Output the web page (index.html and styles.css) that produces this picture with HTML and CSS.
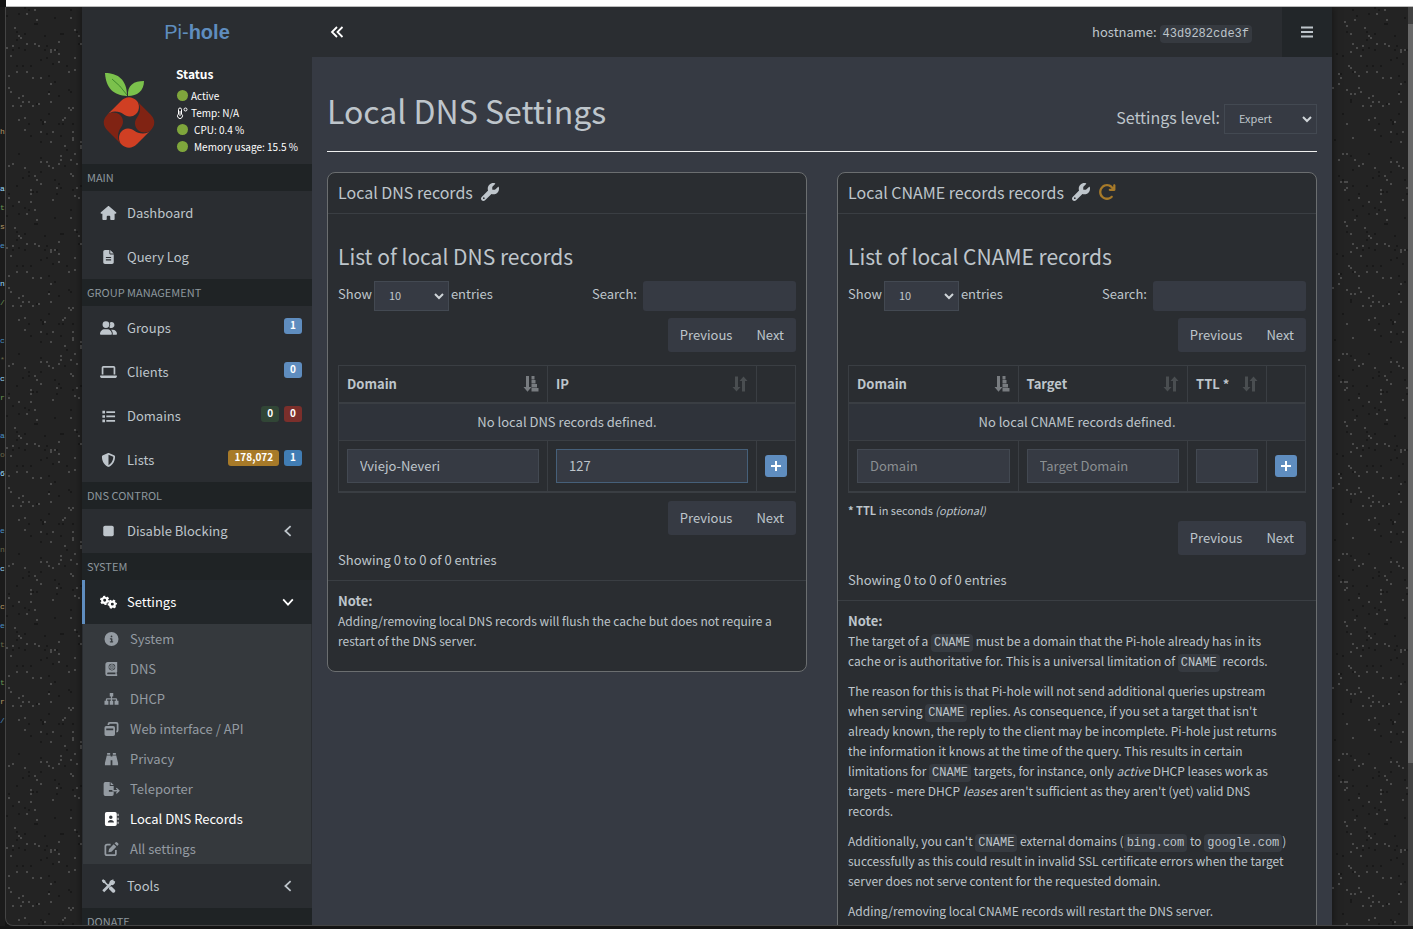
FILE: index.html
```html
<!DOCTYPE html>
<html lang="en">
<head>
  <meta charset="UTF-8">
  <title>Pi-hole - Local DNS Settings</title>
  <link rel="stylesheet" href="styles.css">
</head>
<body>
  <svg class="sprite" aria-hidden="true">
    <symbol id="home" viewBox="0 0 576 512"><path d="M575.8 255.500c0 18-15 32.100-32 32.100h-32l.7 160.200V472c0 22.100-17.900 40-40 40H392c-22.100 0-40-17.900-40-40V384c0-17.700-14.300-32-32-32H256c-17.700 0-32 14.300-32 32v88c0 22.100-17.900 40-40 40H104c-22.100 0-40-17.900-40-40V287.600H32c-18 0-32-14-32-32.100c0-9 3-17 10-24L266.400 8c7-7 15-8 22-8s15 2 21 7L564.800 231.500c8 7 12 15 11 24z"/></symbol>
    <symbol id="file" viewBox="0 0 384 512"><path fill-rule="evenodd" d="M64 0C28.700 0 0 28.700 0 64V448c0 35.300 28.700 64 64 64H320c35.300 0 64-28.700 64-64V160H256c-17.700 0-32-14.300-32-32V0zM256 0V128H384zM96 256H288v40H96zM96 340H288v40H96z"/></symbol>
    <symbol id="users" viewBox="0 0 640 512"><path d="M96 128a128 128 0 1 1 256 0A128 128 0 1 1 96 128zM0 482.300C0 383.800 79.800 304 178.300 304h91.400C368.200 304 448 383.800 448 482.300c0 16.400-13.300 29.700-29.700 29.700H29.700C13.300 512 0 498.700 0 482.300zM609.300 512H471.400c5.400-9.400 8.600-20.300 8.600-32v-8c0-60.700-27.100-115.200-69.800-151.800h68.500C567.800 320 640 392.200 640 481.300c0 17-13.800 30.700-30.700 30.700zM432 256c-31 0-59-12.600-79.300-32.900C372.400 196.500 384 163.600 384 128c0-26.800-6.600-52.100-18.300-74.300C384.300 40.100 407.200 32 432 32c61.900 0 112 50.100 112 112s-50.100 112-112 112z"/></symbol>
    <symbol id="laptop" viewBox="0 0 640 512"><path d="M128 32C92.700 32 64 60.700 64 96V352h64V96H512V352h64V96c0-35.300-28.700-64-64-64H128zM19.200 384C8.600 384 0 392.600 0 403.200C0 445.600 34.400 480 76.800 480H563.200c42.400 0 76.800-34.400 76.800-76.800c0-10.600-8.600-19.200-19.200-19.200z"/></symbol>
    <symbol id="list" viewBox="0 0 16 16"><path d="M1 2h3v3H1zM1 7h3v3H1zM1 12h3v3H1zM5.500 2.500h10v2h-10zM5.500 7.500h10v2h-10zM5.500 12.500h10v2h-10z"/></symbol>
    <symbol id="shield" viewBox="0 0 512 512"><path fill-rule="evenodd" d="M256 0c4.600 0 9.200 1 13.400 2.900L457.700 82.800c22 9.300 38.400 31 38.300 57.200c-.5 99.200-41.300 280.700-213.600 363.200c-16.700 8-36.100 8-52.800 0C57.300 420.700 16.500 239.200 16 140c-.1-26.200 16.300-47.900 38.300-57.200L242.700 2.900C246.800 1 251.400 0 256 0zm0 66.800V444.800C394 378 431.100 230.100 432 141.400z"/></symbol>
    <symbol id="stop" viewBox="0 0 16 16"><rect x="2" y="2" width="12" height="12" rx="2"/></symbol>
    <symbol id="gears" viewBox="0 0 20 16"><g fill="none" stroke="currentColor"><circle cx="5.500" cy="6" r="3" stroke-width="2.500"/><circle cx="5.500" cy="6" r="4.500" stroke-width="2" stroke-dasharray="2.500 2.210"/><circle cx="14.500" cy="10.500" r="3" stroke-width="2.500"/><circle cx="14.500" cy="10.500" r="4.500" stroke-width="2" stroke-dasharray="2.500 2.210" stroke-dashoffset="2"/></g></symbol>
    <symbol id="info" viewBox="0 0 512 512"><path fill-rule="evenodd" d="M256 512A256 256 0 1 0 256 0a256 256 0 1 0 0 512zM216 336h24V272H216c-13.300 0-24-10.700-24-24s10.700-24 24-24h48c13.300 0 24 10.700 24 24v88h8c13.300 0 24 10.700 24 24s-10.700 24-24 24H216c-13.300 0-24-10.700-24-24s10.700-24 24-24zm40-208a32 32 0 1 1 0 64 32 32 0 1 1 0-64z"/></symbol>
    <symbol id="book" viewBox="0 0 16 16"><path fill-rule="evenodd" d="M4 0h10.500v11.500H14v2.500h.5v2H4a3 3 0 0 1-3-3V3a3 3 0 0 1 3-3zM4 12a1 1 0 0 0 0 2h8.500v-2zM8.500 2a3.800 3.800 0 1 0 0 7.600a3.800 3.800 0 1 0 0-7.600z"/><path d="M5.500 5.800h6M8.500 2.800v6" stroke="currentColor"/><circle cx="8.500" cy="5.800" r="2.600" fill="none" stroke="currentColor"/></symbol>
    <symbol id="sitemap" viewBox="0 0 18 16"><path d="M7 1h4v4H9.700v2H14a1.500 1.500 0 0 1 1.500 1.500V10H17v4.500h-4.500V10H14V8.500H9.700V10H11v4.500H7V10h1.300V8.500H4V10h1.500v4.500H1V10h1.500V8.500A1.500 1.500 0 0 1 4 7h4.300V5H7z"/></symbol>
    <symbol id="windows" viewBox="0 0 16 16"><path fill-rule="evenodd" d="M2 4.500h8a2 2 0 0 1 2 2V14a2 2 0 0 1-2 2H2a2 2 0 0 1-2-2V6.500a2 2 0 0 1 2-2zM2 7.500v1.800h8V7.500z"/><path d="M4.500 3.500V2.500Q4.500 1 6 1H13.500Q15 1 15 2.500V9.500Q15 11 13.500 11" fill="none" stroke="currentColor" stroke-width="2"/></symbol>
    <symbol id="binoculars" viewBox="0 0 16 16"><path d="M3 1h3.500v2H3zM9.500 1H13v2H9.500zM2.600 4H7v11H.5v-2.500zM13.400 4H9v11h6.500v-2.500zM7 5h2v4.500H7z"/></symbol>
    <symbol id="export" viewBox="0 0 18 16"><path d="M2 0h5v4.500h4.500V9H6v2h5.500v3a2 2 0 0 1-2 2H2a2 2 0 0 1-2-2V2a2 2 0 0 1 2-2zM8 0l3.500 3.500H8z"/><path d="M10 10h7M14.500 7l3 3l-3 3" fill="none" stroke="currentColor" stroke-width="1.500"/></symbol>
    <symbol id="address" viewBox="0 0 16 16"><path fill-rule="evenodd" d="M2.500 0H12a2 2 0 0 1 2 2v12a2 2 0 0 1-2 2H2.500a2 2 0 0 1-2-2V2a2 2 0 0 1 2-2zM7.200 4a2 2 0 1 0 0 4a2 2 0 1 0 0-4zM3.800 12h7c0-2-1.500-3-3.500-3s-3.500 1-3.500 3zM15 2h1v2.500h-1zM15 6.500h1V9h-1zM15 11h1v2.500h-1z"/></symbol>
    <symbol id="edit" viewBox="0 0 16 16"><path d="M11.500 1.500l1-1q1-1 2 0l1 1q1 1 0 2l-1 1zM10.500 2.500l3 3L8 11l-3.500.7L5.200 8z"/><path d="M7 3H3Q1 3 1 5v8q0 2 2 2h8q2 0 2-2V9" fill="none" stroke="currentColor" stroke-width="2"/></symbol>
    <symbol id="tools" viewBox="0 0 16 16"><path d="M2 14L14 2" stroke="currentColor" stroke-width="3"/><path d="M9 3.500Q10.500 0 14 .5L11.500 3v1.500H13L15.500 2Q16 6 12.500 7Q9 7 9 3.500z"/><path d="M1.500 1.500L8 8" stroke="currentColor" stroke-width="2"/><path d="M.3 1.800L1.800.3L4.500 2v2.500H2zM9 8.500h2.500l4 4q.8 1.500-.5 2.500q-1 1.300-2.500.5l-4-4z"/></symbol>
    <symbol id="wrench" viewBox="0 0 512 512"><path fill-rule="evenodd" d="M352 320c88.400 0 160-71.600 160-160c0-15.300-2.200-30.100-6.200-44.200c-3.100-10.800-16.400-13.200-24.300-5.300l-76.800 76.800c-3 3-7.100 4.700-11.300 4.700H336c-8.800 0-16-7.200-16-16V118.600c0-4.200 1.700-8.300 4.700-11.300l76.800-76.800c7.900-7.900 5.400-21.200-5.300-24.300C382.100 2.200 367.300 0 352 0C263.600 0 192 71.600 192 160c0 19.100 3.400 37.500 9.500 54.500L19.900 396.100C7.200 408.800 0 426.100 0 444.100C0 481.600 30.400 512 67.900 512c18 0 35.300-7.200 48-19.900L297.500 310.500c17 6.200 35.400 9.500 54.500 9.500zM80 408a24 24 0 1 1 0 48 24 24 0 1 1 0-48z"/></symbol>
    <symbol id="reload" viewBox="0 0 512 512"><path d="M386.300 160H336c-17.700 0-32 14.300-32 32s14.300 32 32 32H464c17.700 0 32-14.300 32-32V64c0-17.700-14.300-32-32-32s-32 14.300-32 32v51.200L414.400 97.600c-87.500-87.500-229.300-87.500-316.800 0s-87.500 229.300 0 316.800s229.300 87.500 316.800 0c12.500-12.500 12.500-32.800 0-45.300s-32.800-12.500-45.300 0c-62.500 62.500-163.800 62.500-226.300 0s-62.500-163.800 0-226.300s163.800-62.500 226.300 0z"/></symbol>
    <symbol id="chevron" viewBox="0 0 16 16"><path d="M11 2.500L5 8l6 5.500" fill="none" stroke="currentColor" stroke-width="2"/></symbol>
    <symbol id="sort" viewBox="0 0 16 16"><path d="M3 .5h3V11H8.500L4.500 15.500L.5 11H3zM10 15.500h3V5H15.500L11.500.5L7.500 5H10z"/></symbol>
    <symbol id="sort-asc" viewBox="0 0 16 16"><path d="M3 0h3V11H8.500L4.500 15.800L.5 11H3zM8.500 0h3v3.500h-3zM8.500 4h4v3.500h-4zM8.500 8h5.500v3.500H8.500zM8.500 12h7v3.500h-7z"/></symbol>
  </svg>

  <div class="titlebar"></div>
  <div class="desktop">
    <div class="editor" id="editor" aria-hidden="true"></div>
    <div class="window">
      <svg class="noise" aria-hidden="true">
        <defs><pattern id="specks" width="150" height="200" patternUnits="userSpaceOnUse"></pattern></defs>
        <rect width="100%" height="100%" fill="url(#specks)"/>
      </svg>

      <div class="wrapper">
        <aside class="sidebar">
          <a class="logo" href="#">Pi-<b>hole</b></a>
          <div class="user-panel">
            <svg class="pihole" viewBox="0 0 52 76" aria-hidden="true">
              <path fill="#7bc14c" d="M2 0C14 0 24 6 24 23C11 22 3 16 2 0z"/>
              <path fill="#7bc14c" d="M25 23C24 12 31 8 41 8C41 18 34 23 25 23z"/>
              <path d="M9 6Q17 12 24 22" fill="none" stroke="#3f8a2c"/>
              <path fill="#d03f23" d="M3 43L18 28Q26 20.500 34 28C38 33 36 43 27 43.500C21 43.500 20 38.500 12 38.500Q7 38.500 3 43z"/>
              <path fill="#d03f23" transform="rotate(180 26 49.500)" d="M3 43L18 28Q26 20.500 34 28C38 33 36 43 27 43.500C21 43.500 20 38.500 12 38.500Q7 38.500 3 43z"/>
              <path fill="#802313" transform="rotate(90 26 49.500)" d="M3 43L18 28Q26 20.500 34 28C38 33 36 43 27 43.500C21 43.500 20 38.500 12 38.500Q7 38.500 3 43z"/>
              <path fill="#802313" transform="rotate(270 26 49.500)" d="M3 43L18 28Q26 20.500 34 28C38 33 36 43 27 43.500C21 43.500 20 38.500 12 38.500Q7 38.500 3 43z"/>
            </svg>
            <div class="status">
              <strong>Status</strong>
              <ul>
                <li><i class="dot"></i>Active</li>
                <li><svg class="thermo" viewBox="0 0 11 12"><path d="M1.500 2.500a1.500 1.500 0 0 1 3 0V7a2.500 2.500 0 1 1-3 0zM3 4v5" fill="none" stroke="currentColor"/><circle cx="8.500" cy="2.500" r="1.500" fill="none" stroke="currentColor"/></svg>Temp: N/A</li>
                <li><i class="dot wide"></i>CPU: 0.4 %</li>
                <li><i class="dot wide"></i>Memory usage: 15.5 %</li>
              </ul>
            </div>
          </div>
          <nav>
            <h2>MAIN</h2>
            <a href="#"><svg><use href="#home"/></svg>Dashboard</a>
            <a href="#"><svg><use href="#file"/></svg>Query Log</a>
            <h2>GROUP MANAGEMENT</h2>
            <a href="#"><svg><use href="#users"/></svg>Groups<span class="labels"><b>1</b></span></a>
            <a href="#"><svg><use href="#laptop"/></svg>Clients<span class="labels"><b>0</b></span></a>
            <a href="#"><svg><use href="#list"/></svg>Domains<span class="labels"><b class="green">0</b><b class="red">0</b></span></a>
            <a href="#"><svg><use href="#shield"/></svg>Lists<span class="labels"><b class="yellow">178,072</b><b class="blue">1</b></span></a>
            <h2>DNS CONTROL</h2>
            <a href="#"><svg><use href="#stop"/></svg>Disable Blocking<svg class="arrow"><use href="#chevron"/></svg></a>
            <h2>SYSTEM</h2>
            <a href="#" class="active"><svg><use href="#gears"/></svg>Settings<svg class="arrow down"><use href="#chevron"/></svg></a>
            <div class="submenu">
              <a href="#"><svg><use href="#info"/></svg>System</a>
              <a href="#"><svg><use href="#book"/></svg>DNS</a>
              <a href="#"><svg><use href="#sitemap"/></svg>DHCP</a>
              <a href="#"><svg><use href="#windows"/></svg>Web interface / API</a>
              <a href="#"><svg><use href="#binoculars"/></svg>Privacy</a>
              <a href="#"><svg><use href="#export"/></svg>Teleporter</a>
              <a href="#" class="current"><svg><use href="#address"/></svg>Local DNS Records</a>
              <a href="#"><svg><use href="#edit"/></svg>All settings</a>
            </div>
            <a href="#"><svg><use href="#tools"/></svg>Tools<svg class="arrow"><use href="#chevron"/></svg></a>
            <h2>DONATE</h2>
          </nav>
        </aside>

        <div class="page">
          <header class="navbar">
            <button type="button" class="toggle" aria-label="Toggle sidebar"><svg viewBox="0 0 14 14"><path d="M7 2L2 7l5 5M12.500 2l-5 5l5 5" fill="none" stroke="currentColor" stroke-width="1.800"/></svg></button>
            <span class="hostname">hostname: <code>43d9282cde3f</code></span>
            <button type="button" class="menu" aria-label="Menu"><svg viewBox="0 0 12 12"><path d="M0 1.500h12M0 6h12M0 10.500h12" stroke="currentColor" stroke-width="2"/></svg></button>
          </header>

          <main>
            <div class="page-header">
              <h1>Local DNS Settings</h1>
              <label>Settings level: <select class="level"><option>Expert</option><option>Basic</option></select></label>
            </div>

            <div class="row">
              <section class="box">
                <div class="box-header"><h3>Local DNS records</h3><svg><use href="#wrench"/></svg></div>
                <div class="box-body">
                  <h2>List of local DNS records</h2>
                  <div class="controls">
                    <label>Show <select><option>10</option><option>25</option></select> entries</label>
                    <label class="search">Search: <input type="search"></label>
                  </div>
                  <div class="pager"><button type="button">Previous</button><button type="button">Next</button></div>
                  <table>
                    <colgroup><col><col><col class="col-add"></colgroup>
                    <thead>
                      <tr>
                        <th><div>Domain<svg class="sorted"><use href="#sort-asc"/></svg></div></th>
                        <th><div>IP<svg><use href="#sort"/></svg></div></th>
                        <th></th>
                      </tr>
                    </thead>
                    <tbody><tr><td colspan="3" class="empty">No local DNS records defined.</td></tr></tbody>
                    <tfoot>
                      <tr>
                        <td><input type="text" aria-label="Domain" value="Vviejo-Neveri"></td>
                        <td><input type="text" aria-label="IP" class="focused" value="127"></td>
                        <td><button type="button" class="add" aria-label="Add"><svg viewBox="0 0 12 12"><path d="M6 1v10M1 6h10" stroke="currentColor" stroke-width="2"/></svg></button></td>
                      </tr>
                    </tfoot>
                  </table>
                  <div class="pager bottom"><button type="button">Previous</button><button type="button">Next</button></div>
                  <div class="showing">Showing 0 to 0 of 0 entries</div>
                </div>
                <div class="box-footer">
                  <strong>Note:</strong>
                  <p>Adding/removing local DNS records will flush the cache but does not require a<br>restart of the DNS server.</p>
                </div>
              </section>

              <section class="box">
                <div class="box-header"><h3>Local CNAME records records</h3><svg><use href="#wrench"/></svg><svg class="restart"><use href="#reload"/></svg></div>
                <div class="box-body">
                  <h2>List of local CNAME records</h2>
                  <div class="controls">
                    <label>Show <select><option>10</option><option>25</option></select> entries</label>
                    <label class="search">Search: <input type="search"></label>
                  </div>
                  <div class="pager"><button type="button">Previous</button><button type="button">Next</button></div>
                  <table>
                    <colgroup><col><col><col class="col-ttl"><col class="col-add"></colgroup>
                    <thead>
                      <tr>
                        <th><div>Domain<svg class="sorted"><use href="#sort-asc"/></svg></div></th>
                        <th><div>Target<svg><use href="#sort"/></svg></div></th>
                        <th><div>TTL *<svg><use href="#sort"/></svg></div></th>
                        <th></th>
                      </tr>
                    </thead>
                    <tbody><tr><td colspan="4" class="empty">No local CNAME records defined.</td></tr></tbody>
                    <tfoot>
                      <tr>
                        <td><input type="text" aria-label="Domain" placeholder="Domain"></td>
                        <td><input type="text" aria-label="Target Domain" placeholder="Target Domain"></td>
                        <td><input type="text" aria-label="TTL"></td>
                        <td><button type="button" class="add" aria-label="Add"><svg viewBox="0 0 12 12"><path d="M6 1v10M1 6h10" stroke="currentColor" stroke-width="2"/></svg></button></td>
                      </tr>
                    </tfoot>
                  </table>
                  <div class="ttl"><b>* TTL</b> in seconds <em>(optional)</em></div>
                  <div class="pager"><button type="button">Previous</button><button type="button">Next</button></div>
                  <div class="showing">Showing 0 to 0 of 0 entries</div>
                </div>
                <div class="box-footer">
                  <strong>Note:</strong>
                  <p>The target of a <code>CNAME</code> must be a domain that the Pi-hole already has in its<br>cache or is authoritative for. This is a universal limitation of <code>CNAME</code> records.</p>
                  <p>The reason for this is that Pi-hole will not send additional queries upstream<br>when serving <code>CNAME</code> replies. As consequence, if you set a target that isn't<br>already known, the reply to the client may be incomplete. Pi-hole just returns<br>the information it knows at the time of the query. This results in certain<br>limitations for <code>CNAME</code> targets, for instance, only <em>active</em> DHCP leases work as<br>targets - mere DHCP <em>leases</em> aren't sufficient as they aren't (yet) valid DNS<br>records.</p>
                  <p>Additionally, you can't <code>CNAME</code> external domains (<code>bing.com</code> to <code>google.com</code>)<br>successfully as this could result in invalid SSL certificate errors when the target<br>server does not serve content for the requested domain.</p>
                  <p>Adding/removing local CNAME records will restart the DNS server.</p>
                </div>
              </section>
            </div>
          </main>
        </div>
      </div>
      <div class="scrollbar"><div class="thumb"></div></div>
    </div>
  </div>

  <script src="script.js"></script>
</body>
</html>
```
FILE: script.js
```js
// speckled background tile
const specks = document.getElementById('specks');
let seed = 7;
function rand(max) {
  seed = (seed * 16807) % 2147483647;
  return seed % max;
}
for (let i = 0; i < 300; i++) {
  const r = document.createElementNS('http://www.w3.org/2000/svg', 'rect');
  r.setAttribute('x', rand(75) * 2);
  r.setAttribute('y', rand(100) * 2);
  r.setAttribute('width', 2);
  r.setAttribute('height', 2);
  r.setAttribute('fill', i % 5 < 3 ? '#4a4a4a' : '#191919');
  specks.appendChild(r);
}

// edge of the code editor behind the window, one entry per line
const lines = ['h', '', '', 'a', 't', 's', 'e', '', 'n', '/', '', 'c', '*', 'c', 'r', '', 'a',
  'o', '6', '', '', 'e', 'n', 'c', '', 'c', 'e', 't', '', 't', 'r', '/'];
const colors = ['#b79a66', '#6a6a4a', '#6a9955', '#4a8fc4', '#9cdcfe'];
const editor = document.getElementById('editor');
lines.forEach((text, i) => {
  const row = document.createElement('span');
  row.textContent = text;
  row.style.color = colors[(i * 3) % colors.length];
  editor.appendChild(row);
});
```
FILE: styles.css
```css
* {
  box-sizing: border-box;
}
body {
  margin: 0;
  height: 100vh;
  display: flex;
  flex-direction: column;
  overflow: hidden;
  background: #141414;
  color: #bec5cb;
  font-family: "Noto Sans CJK SC", "Open Sans", sans-serif;
  font-size: 13px;
  line-height: 20px;
}
h1, h2, h3, p, ul {
  margin: 0;
  padding: 0;
  font-weight: normal;
}
a {
  color: inherit;
  text-decoration: none;
}
button, input, select {
  font-family: inherit;
  font-size: 13px;
  color: inherit;
  margin: 0;
}
button {
  padding: 0;
  border: 0;
  background: none;
}
svg {
  fill: currentColor;
}
.sprite {
  position: absolute;
  width: 0;
  height: 0;
}
.titlebar {
  flex: none;
  height: 7px;
  margin-left: 6px;
  background: #fff;
  border-bottom: 1px solid #bbb;
}
.desktop {
  flex: 1;
  min-height: 0;
  display: flex;
  padding-bottom: 3px;
}
.editor {
  width: 5px;
  padding-top: 115px;
  background: #1b1b1b;
  font-family: "Liberation Mono", monospace;
  font-size: 8px;
}
.editor span {
  display: block;
  height: 19px;
  line-height: 19px;
}
.window {
  position: relative;
  flex: 1;
  display: flex;
  overflow: hidden;
  background: #232323;
  border-left: 1px solid #444;
  border-bottom: 1px solid #444;
  border-bottom-left-radius: 8px;
}
.noise {
  position: absolute;
  width: 100%;
  height: 100%;
}
.wrapper {
  position: relative;
  flex: 1;
  max-width: 1250px;
  margin: 0 auto;
  display: flex;
  align-items: stretch;
  background: #363a43;
  box-shadow: 0 0 8px rgba(0, 0, 0, 0.5);
}
.scrollbar {
  position: relative;
  width: 5px;
  background: #424242;
  padding-top: 17px;
}
.thumb {
  height: 82%;
  background: #686868;
}

/* sidebar */
.sidebar {
  width: 230px;
  flex: none;
  background: #2a2d31;
}
.logo {
  display: block;
  height: 50px;
  line-height: 50px;
  text-align: center;
  font-family: "Liberation Sans", sans-serif;
  font-size: 20px;
  color: #5f8dbf;
}
.user-panel {
  display: flex;
  height: 107px;
  padding: 7px 0 0 21px;
  color: #fff;
}
.pihole {
  width: 52px;
  height: 76px;
  margin-top: 9px;
}
.status {
  margin-left: 21px;
  font-size: 12px;
}
.status ul {
  list-style: none;
  padding: 3px 0 0 1px;
}
.status li {
  display: flex;
  align-items: center;
  height: 17px;
  font-size: 10px;
  white-space: nowrap;
}
.dot {
  width: 11px;
  height: 11px;
  margin-right: 3px;
  border-radius: 50%;
  background: #7fa63c;
}
.dot.wide {
  margin-right: 6px;
}
.thermo {
  width: 11px;
  height: 12px;
  margin-right: 3px;
}
nav h2 {
  height: 27px;
  padding-left: 5px;
  line-height: 26px;
  font-size: 11px;
  color: #8d979d;
  background: #1f2325;
}
nav a {
  display: flex;
  align-items: center;
  height: 44px;
  padding: 0 10px 0 15px;
  border-left: 3px solid transparent;
}
nav a svg {
  flex: none;
  width: 17px;
  height: 14px;
  margin-right: 10px;
}
nav a .arrow {
  width: 14px;
  height: 14px;
  margin: 0 7px 0 auto;
}
nav .arrow.down {
  transform: rotate(-90deg);
}
nav a.active {
  color: #fff;
  background: #222629;
  border-left-color: #5f8dbf;
}
.labels {
  display: flex;
  gap: 5px;
  margin-left: auto;
  padding-bottom: 4px;
}
.labels b {
  height: 16px;
  padding: 0 6px;
  line-height: 14px;
  font-size: 10px;
  color: #fff;
  background: #5f8dbf;
  border-radius: 3px;
}
.labels .green {
  background: #314636;
}
.labels .red {
  background: #7b2f2b;
}
.labels .yellow {
  background: #a77a29;
}
.labels .blue {
  background: #417db4;
}
.submenu {
  margin: 0 1px;
  background: #35393d;
  color: #949ba2;
}
.submenu a {
  height: 30px;
  padding-left: 17px;
}
.submenu .current {
  color: #fff;
}

/* top bar */
.page {
  flex: 1;
  min-width: 0;
}
.navbar {
  display: flex;
  align-items: center;
  height: 50px;
  background: #2a2d31;
}
.navbar svg {
  display: block;
  margin: auto;
}
.toggle {
  width: 50px;
  height: 50px;
  color: #fff;
}
.toggle svg {
  width: 14px;
  height: 14px;
}
.hostname {
  margin-left: auto;
  margin-right: 30px;
}
code {
  padding: 2px 3px;
  border-radius: 4px;
  background: #363a40;
  font-family: "Liberation Mono", monospace;
  font-size: 12px;
  line-height: 14px;
}
.menu {
  width: 50px;
  height: 50px;
  background: #222629;
}
.menu svg {
  width: 12px;
  height: 12px;
}

/* content */
main {
  padding: 33px 15px 0;
}
.page-header {
  display: flex;
  justify-content: space-between;
  align-items: flex-end;
  padding-bottom: 17px;
  margin-bottom: 20px;
  border-bottom: 1px solid #f0f0f0;
}
h1 {
  padding-bottom: 4px;
  font-size: 32px;
  line-height: 40px;
}
.page-header label {
  display: flex;
  gap: 4px;
  font-size: 16px;
  line-height: 26px;
}
select {
  appearance: none;
  width: 75px;
  height: 30px;
  padding: 0 14px 2px;
  border: 1px solid #434952;
  border-radius: 0;
  font-size: 11px;
  background: #363a43 url("data:image/svg+xml,%3Csvg xmlns='http://www.w3.org/2000/svg' width='10' height='8'%3E%3Cpath d='M1 2l4 4l4-4' fill='none' stroke='%23cfd4d8' stroke-width='2'/%3E%3C/svg%3E") no-repeat right 4px center;
}
.level {
  width: 93px;
}
.row {
  display: flex;
  align-items: flex-start;
  gap: 30px;
}
.box {
  flex: 1;
  min-width: 0;
  background: #2a2d31;
  border: 1px solid #6b6e70;
  border-radius: 8px;
}
.box-header {
  display: flex;
  align-items: center;
  gap: 8px;
  height: 41px;
  padding: 0 10px 2px;
  border-bottom: 1px solid #3a3e43;
}
.box-header h3 {
  font-size: 16px;
}
.box-header svg {
  width: 18px;
  height: 18px;
}
.box-header .restart {
  color: #a77a29;
}
.box-body {
  padding: 29px 10px 10px;
}
.box-body h2 {
  margin-bottom: 11px;
  font-size: 21px;
  line-height: 27px;
}
.controls {
  display: flex;
  justify-content: space-between;
}
.controls label {
  display: flex;
  gap: 2px;
  line-height: 26px;
}
.controls .search {
  gap: 6px;
}
.search input {
  width: 153px;
  height: 30px;
  border: 0;
  border-radius: 3px;
  background: #363a43;
}
.pager {
  display: flex;
  width: max-content;
  margin: 7px 0 13px auto;
  border-radius: 3px;
  background: #363a43;
}
.pager button {
  height: 34px;
  padding: 0 12px 2px;
}
.pager.bottom {
  margin-top: 8px;
}
table {
  width: 100%;
  table-layout: fixed;
  border-collapse: collapse;
}
th, td {
  padding: 8px;
  border: 1px solid #3a3e43;
  text-align: left;
}
thead th {
  border-bottom-width: 2px;
}
tfoot td {
  border-bottom-width: 2px;
}
.col-add {
  width: 39px;
}
.col-ttl {
  width: 79px;
}
th div {
  display: flex;
  align-items: center;
  justify-content: space-between;
}
th svg {
  width: 16px;
  height: 16px;
  color: #4a4e51;
}
th .sorted {
  color: #787c80;
}
td.empty {
  text-align: center;
  background: #2f333a;
}
td input {
  display: block;
  width: 100%;
  height: 34px;
  padding: 0 12px 2px;
  border: 1px solid #434952;
  background: #363a43;
}
td input::placeholder {
  color: #8b8f92;
}
td .focused {
  border-color: #46607a;
}
.add {
  display: block;
  width: 22px;
  height: 22px;
  color: #fff;
  background: #5f8dbf;
  border-radius: 3px;
}
.add svg {
  display: block;
  width: 12px;
  height: 12px;
  margin: auto;
}
.ttl {
  margin-top: 7px;
  font-size: 11px;
}
.ttl + .pager {
  margin-top: 1px;
}
.showing {
  margin-top: 15px;
}
.box-footer {
  padding: 10px;
  border-top: 1px solid #3a3e43;
}
.box-footer strong {
  display: block;
}
.box-footer p {
  margin-bottom: 10px;
  font-size: 12px;
  white-space: nowrap;
}
```
